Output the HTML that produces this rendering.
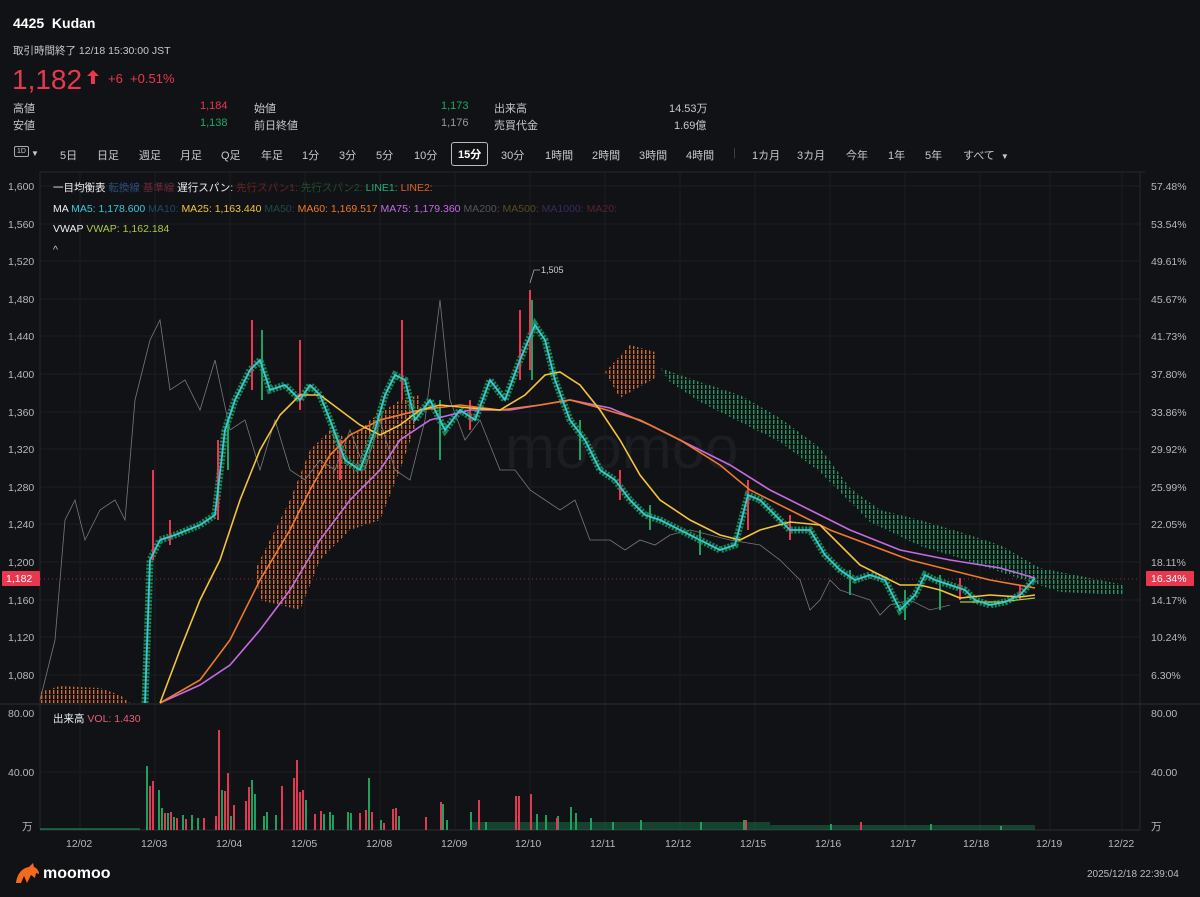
<!DOCTYPE html>
<html><head><meta charset="utf-8"><style>
*{margin:0;padding:0;box-sizing:border-box}
body{width:1200px;height:897px;background:#111216;color:#ddd;font-family:"Liberation Sans","Noto Sans CJK JP",sans-serif;position:relative;overflow:hidden}
.a{position:absolute;white-space:nowrap}
.s{font-size:11px;color:#c8c8cc}
.r{color:#e8384f}.g{color:#22a860}
.tabs span{position:absolute;top:0;font-size:11px;color:#c8c8cc}
</style></head><body>
<div class="a" style="left:13px;top:15px;font-size:14px;color:#fff;font-weight:bold">4425&nbsp; Kudan</div>
<div class="a s" style="left:13px;top:43px;font-size:10.5px">取引時間終了 12/18 15:30:00 JST</div>
<div class="a r" style="left:12px;top:64px;font-size:28px">1,182</div>
<svg class="a" style="left:87px;top:70px" width="12" height="14" viewBox="0 0 12 14"><path d="M6 0 L12 6 L8 6 L8 14 L4 14 L4 6 L0 6 Z" fill="#e8384f"/></svg>
<div class="a r" style="left:108px;top:71px;font-size:13px">+6&nbsp; +0.51%</div>
<div class="a s" style="left:13px;top:100px">高値</div><div class="a s r" style="left:200px;top:100px">1,184</div>
<div class="a s" style="left:254px;top:100px">始値</div><div class="a s g" style="left:441px;top:100px">1,173</div>
<div class="a s" style="left:494px;top:100px">出来高</div><div class="a s" style="left:669px;top:100px">14.53万</div>
<div class="a s" style="left:13px;top:117px">安値</div><div class="a s g" style="left:200px;top:117px">1,138</div>
<div class="a s" style="left:254px;top:117px">前日終値</div><div class="a s" style="left:441px;top:117px;color:#999">1,176</div>
<div class="a s" style="left:494px;top:117px">売買代金</div><div class="a s" style="left:674px;top:117px">1.69億</div>
<div class="a tabs" style="left:0;top:147px;width:1200px;height:14px">
<span style="left:14px;top:-1px;border:1px solid #aaa;border-radius:2px;font-size:7px;padding:1px 2px">1D</span><span style="left:31px;font-size:8px;top:2px">▼</span>
<span style="left:60px">5日</span><span style="left:97px">日足</span><span style="left:139px">週足</span><span style="left:180px">月足</span><span style="left:221px">Q足</span><span style="left:261px">年足</span><span style="left:302px">1分</span><span style="left:339px">3分</span><span style="left:376px">5分</span><span style="left:414px">10分</span>
<span style="left:451px;top:-5px;border:1px solid #bbb;border-radius:3px;padding:3px 6px;color:#fff;font-weight:bold">15分</span>
<span style="left:501px">30分</span><span style="left:545px">1時間</span><span style="left:592px">2時間</span><span style="left:639px">3時間</span><span style="left:686px">4時間</span>
<span style="left:733px;color:#444">|</span><span style="left:752px">1カ月</span><span style="left:797px">3カ月</span><span style="left:846px">今年</span><span style="left:888px">1年</span><span style="left:925px">5年</span><span style="left:963px">すべて&nbsp; <small style="font-size:8px">▼</small></span>
</div>
<svg class="a" style="left:0;top:0" width="1200" height="897">
<defs>
<pattern id="pg" width="4" height="5" patternUnits="userSpaceOnUse"><rect x="1" y="0" width="1.4" height="4" fill="#1f9b62"/></pattern>
<pattern id="po" width="4" height="5" patternUnits="userSpaceOnUse"><rect x="1" y="0" width="1.4" height="4" fill="#d66a2a"/></pattern>
</defs>
<line x1="40" y1="172" x2="1145" y2="172" stroke="#26272c"/>
<g stroke="#1c1d22">
<line x1="40" y1="186" x2="1140" y2="186"/><line x1="40" y1="224" x2="1140" y2="224"/><line x1="40" y1="261" x2="1140" y2="261"/><line x1="40" y1="299" x2="1140" y2="299"/><line x1="40" y1="336" x2="1140" y2="336"/><line x1="40" y1="374" x2="1140" y2="374"/><line x1="40" y1="412" x2="1140" y2="412"/><line x1="40" y1="449" x2="1140" y2="449"/><line x1="40" y1="487" x2="1140" y2="487"/><line x1="40" y1="524" x2="1140" y2="524"/><line x1="40" y1="562" x2="1140" y2="562"/><line x1="40" y1="600" x2="1140" y2="600"/><line x1="40" y1="637" x2="1140" y2="637"/><line x1="40" y1="675" x2="1140" y2="675"/>
<line x1="40" y1="772" x2="1140" y2="772"/>
<line x1="80" y1="172" x2="80" y2="830"/><line x1="155" y1="172" x2="155" y2="830"/><line x1="230" y1="172" x2="230" y2="830"/><line x1="305" y1="172" x2="305" y2="830"/><line x1="380" y1="172" x2="380" y2="830"/><line x1="455" y1="172" x2="455" y2="830"/><line x1="530" y1="172" x2="530" y2="830"/><line x1="605" y1="172" x2="605" y2="830"/><line x1="680" y1="172" x2="680" y2="830"/><line x1="755" y1="172" x2="755" y2="830"/><line x1="830" y1="172" x2="830" y2="830"/><line x1="905" y1="172" x2="905" y2="830"/><line x1="980" y1="172" x2="980" y2="830"/><line x1="1050" y1="172" x2="1050" y2="830"/><line x1="1122" y1="172" x2="1122" y2="830"/>
</g>
<line x1="40" y1="172" x2="40" y2="830" stroke="#26272c"/><line x1="1140" y1="172" x2="1140" y2="830" stroke="#26272c"/>
<line x1="0" y1="704" x2="1200" y2="704" stroke="#2c2d33"/>
<line x1="40" y1="830" x2="1140" y2="830" stroke="#2c2d33"/>
<text x="505" y="468" font-size="60" fill="#1b1d22" font-family="Liberation Sans">moomoo</text>
<g font-size="10.5" fill="#b8b8bc" font-family="Liberation Sans">
<text x="8" y="190">1,600</text><text x="8" y="228">1,560</text><text x="8" y="265">1,520</text><text x="8" y="303">1,480</text><text x="8" y="340">1,440</text><text x="8" y="378">1,400</text><text x="8" y="416">1,360</text><text x="8" y="453">1,320</text><text x="8" y="491">1,280</text><text x="8" y="528">1,240</text><text x="8" y="566">1,200</text><text x="8" y="604">1,160</text><text x="8" y="641">1,120</text><text x="8" y="679">1,080</text>
<text x="1151" y="190">57.48%</text><text x="1151" y="228">53.54%</text><text x="1151" y="265">49.61%</text><text x="1151" y="303">45.67%</text><text x="1151" y="340">41.73%</text><text x="1151" y="378">37.80%</text><text x="1151" y="416">33.86%</text><text x="1151" y="453">29.92%</text><text x="1151" y="491">25.99%</text><text x="1151" y="528">22.05%</text><text x="1151" y="566">18.11%</text><text x="1151" y="604">14.17%</text><text x="1151" y="679">6.30%</text><text x="1151" y="641">10.24%</text>
<text x="8" y="717">80.00</text><text x="8" y="776">40.00</text><text x="1151" y="717">80.00</text><text x="1151" y="776">40.00</text>
<text x="22" y="830" font-family="Noto Sans CJK JP">万</text><text x="1151" y="830" font-family="Noto Sans CJK JP">万</text>
<text x="66" y="847">12/02</text><text x="141" y="847">12/03</text><text x="216" y="847">12/04</text><text x="291" y="847">12/05</text><text x="366" y="847">12/08</text><text x="441" y="847">12/09</text><text x="515" y="847">12/10</text><text x="590" y="847">12/11</text><text x="665" y="847">12/12</text><text x="740" y="847">12/15</text><text x="815" y="847">12/16</text><text x="890" y="847">12/17</text><text x="963" y="847">12/18</text><text x="1036" y="847">12/19</text><text x="1108" y="847">12/22</text>
</g>
<line x1="40" y1="579" x2="1140" y2="579" stroke="#e8384f" stroke-dasharray="1 3" opacity=".6"/>
<rect x="2" y="571" width="38" height="15" fill="#e8384f" rx="1"/><text x="6" y="582" font-size="10.5" fill="#fff">1,182</text>
<rect x="1146" y="571" width="48" height="15" fill="#e8384f" rx="1"/><text x="1151" y="582" font-size="10.5" fill="#fff">16.34%</text>
<polygon fill="url(#pg)" points="660,368 700,382 740,395 780,418 820,448 850,488 880,510 920,520 960,532 1000,545 1040,568 1125,585 1125,595 1060,592 1000,572 960,558 920,546 870,522 850,502 820,472 780,442 740,422 700,402 670,382"/>
<polygon fill="url(#po)" points="255,570 290,500 310,450 330,430 350,440 370,420 400,400 420,395 420,412 400,470 380,520 350,530 320,560 300,610 260,600"/>
<polygon fill="url(#po)" points="605,372 630,345 655,352 655,378 620,398"/>
<polygon fill="url(#po)" points="40,692 60,686 100,688 120,695 130,703 40,703"/>
<polyline fill="none" stroke="#77777c" stroke-width="0.8" points="40,700 55,640 65,520 75,500 85,540 100,510 115,500 125,520 135,400 150,340 160,320 170,390 185,380 200,410 215,360 230,430 245,420 260,470 275,420 290,470 305,480 320,460 335,470 350,430 365,470 380,420 395,470 410,480 425,420 440,300 450,400 465,440 480,420 500,470 515,470 530,490 545,500 560,510 575,500 590,540 610,540 625,550 640,540 655,545 670,535 690,530 710,535 730,540 760,545 780,560 800,580 810,610 820,600 830,580 840,590 855,595 870,600 880,615 890,605 910,600 930,610 950,605"/>
<polyline fill="none" stroke="#17844f" stroke-width="7" stroke-dasharray="2.2 1.4" points="145,703 150,560 160,540 175,535 200,525 215,515 225,430 235,400 250,370 260,360 270,390 285,385 300,400 310,385 320,395 330,420 345,460 360,470 375,430 385,395 395,375 405,380 415,420 430,400 445,430 460,410 475,420 490,380 505,400 520,360 535,325 545,340 555,380 570,420 585,440 600,470 615,480 630,500 645,515 660,520 680,530 700,540 720,550 735,545 748,495 760,500 775,515 790,530 810,530 825,555 840,570 855,580 870,575 885,580 900,610 915,595 925,575 935,580 950,585 965,590 975,600 990,605 1005,602 1020,595 1035,578"/>
<g stroke="#e8384f" stroke-width="2"><line x1="153" y1="470" x2="153" y2="560"/><line x1="218" y1="440" x2="218" y2="520"/><line x1="252" y1="320" x2="252" y2="390"/><line x1="300" y1="340" x2="300" y2="410"/><line x1="402" y1="320" x2="402" y2="400"/><line x1="530" y1="290" x2="530" y2="370"/><line x1="520" y1="310" x2="520" y2="380"/><line x1="748" y1="480" x2="748" y2="530"/><line x1="960" y1="578" x2="960" y2="600"/><line x1="1020" y1="585" x2="1020" y2="600"/><line x1="170" y1="520" x2="170" y2="545"/><line x1="340" y1="440" x2="340" y2="480"/><line x1="470" y1="400" x2="470" y2="430"/><line x1="620" y1="470" x2="620" y2="500"/><line x1="790" y1="515" x2="790" y2="540"/></g>
<g stroke="#1fa05f" stroke-width="2"><line x1="228" y1="420" x2="228" y2="470"/><line x1="262" y1="330" x2="262" y2="400"/><line x1="440" y1="400" x2="440" y2="460"/><line x1="532" y1="300" x2="532" y2="380"/><line x1="905" y1="590" x2="905" y2="620"/><line x1="940" y1="575" x2="940" y2="610"/><line x1="580" y1="420" x2="580" y2="460"/><line x1="650" y1="505" x2="650" y2="530"/><line x1="700" y1="530" x2="700" y2="555"/><line x1="850" y1="570" x2="850" y2="595"/></g>
<polyline fill="none" stroke="#aaa" stroke-width="0.8" points="530,283 534,270 540,270"/><text x="541" y="273" font-size="9" fill="#ccc">1,505</text>
<polyline fill="none" stroke="#c36ce0" stroke-width="1.6" points="160,703 200,685 230,665 260,630 290,590 320,540 350,500 380,470 400,440 430,420 470,410 510,410 540,405 570,400 610,408 650,425 690,445 730,465 770,490 810,510 850,530 900,550 950,560 1000,568 1035,578"/>
<polyline fill="none" stroke="#f07a2a" stroke-width="1.6" points="160,703 200,680 230,640 260,580 290,530 310,490 330,455 350,435 380,420 420,410 460,405 500,410 540,405 570,400 600,408 640,420 680,440 720,465 750,490 790,510 830,530 870,545 910,560 950,570 990,580 1035,588"/>
<polyline fill="none" stroke="#f3c43a" stroke-width="1.6" points="160,703 180,650 200,600 220,560 240,500 260,450 280,415 300,395 320,395 340,410 360,425 380,435 400,425 420,410 440,405 470,408 500,410 525,395 545,375 560,372 580,385 600,410 620,440 640,475 660,500 690,520 720,535 740,540 760,530 790,522 820,525 840,545 860,565 880,575 900,585 920,585 940,590 960,598 990,595 1020,597 1035,595"/>
<polyline fill="none" stroke="#a8c84a" stroke-width="1.2" points="960,602 1000,602 1035,598"/>
<polyline fill="none" stroke="#3cc6d8" stroke-width="1.8" points="145,703 150,560 160,540 175,535 200,525 215,515 225,430 235,400 250,370 260,360 270,390 285,385 300,400 310,385 320,395 330,420 345,460 360,470 375,430 385,395 395,375 405,380 415,420 430,400 445,430 460,410 475,420 490,380 505,400 520,360 535,325 545,340 555,380 570,420 585,440 600,470 615,480 630,500 645,515 660,520 680,530 700,540 720,550 735,545 748,495 760,500 775,515 790,530 810,530 825,555 840,570 855,580 870,575 885,580 900,610 915,595 925,575 935,580 950,585 965,590 975,600 990,605 1005,602 1020,595 1035,578"/>
<g font-size="10.5" font-family="Liberation Sans,Noto Sans CJK JP,sans-serif">
<text x="53" y="191" fill="#eee">一目均衡表 <tspan fill="#2d4b7a">転換線</tspan> <tspan fill="#6a2a3a">基準線</tspan> <tspan fill="#eee">遅行スパン:</tspan> <tspan fill="#6a2222">先行スパン1:</tspan> <tspan fill="#244a2e">先行スパン2:</tspan> <tspan fill="#20b070">LINE1:</tspan>  <tspan fill="#e0602a">LINE2:</tspan></text>
<text x="53" y="212" fill="#eee">MA <tspan fill="#3cc6d8">MA5: 1,178.600</tspan> <tspan fill="#1e4a60">MA10:</tspan> <tspan fill="#f3c43a">MA25: 1,163.440</tspan> <tspan fill="#1e4a48">MA50:</tspan> <tspan fill="#f07a2a">MA60: 1,169.517</tspan> <tspan fill="#c36ce0">MA75: 1,179.360</tspan> <tspan fill="#555">MA200:</tspan> <tspan fill="#5a4a22">MA500:</tspan> <tspan fill="#3a2a5a">MA1000:</tspan> <tspan fill="#5a2230">MA20:</tspan></text>
<text x="53" y="232" fill="#eee">VWAP <tspan fill="#a8c84a">VWAP: 1,162.184</tspan></text>
<text x="53" y="253" fill="#ccc">^</text>
<text x="53" y="722" fill="#eee">出来高 <tspan fill="#e8606f">VOL: 1.430</tspan></text>
</g>
<g fill="#1fa05f">
<rect x="146" y="766" width="2" height="64"/><rect x="158" y="790" width="2" height="40"/><rect x="161" y="808" width="2" height="22"/><rect x="167" y="813" width="2" height="17"/><rect x="173" y="817" width="2" height="13"/><rect x="182" y="815" width="2" height="15"/><rect x="191" y="815" width="2" height="15"/><rect x="197" y="818" width="2" height="12"/><rect x="221" y="790" width="2" height="40"/><rect x="227" y="813" width="2" height="17"/><rect x="230" y="816" width="2" height="14"/><rect x="251" y="780" width="2" height="50"/><rect x="254" y="794" width="2" height="36"/><rect x="263" y="816" width="2" height="14"/><rect x="266" y="812" width="2" height="18"/><rect x="275" y="815" width="2" height="15"/><rect x="305" y="800" width="2" height="30"/><rect x="323" y="814" width="2" height="16"/><rect x="329" y="812" width="2" height="18"/><rect x="332" y="815" width="2" height="15"/><rect x="347" y="812" width="2" height="18"/><rect x="350" y="813" width="2" height="17"/><rect x="368" y="778" width="2" height="52"/><rect x="380" y="820" width="2" height="10"/><rect x="398" y="816" width="2" height="14"/><rect x="442" y="804" width="2" height="26"/><rect x="446" y="820" width="2" height="10"/><rect x="470" y="812" width="2" height="18"/><rect x="485" y="822" width="2" height="8"/><rect x="536" y="814" width="2" height="16"/><rect x="545" y="815" width="2" height="15"/><rect x="557" y="816" width="2" height="14"/><rect x="570" y="807" width="2" height="23"/><rect x="575" y="813" width="2" height="17"/><rect x="590" y="818" width="2" height="12"/><rect x="612" y="822" width="2" height="8"/><rect x="640" y="820" width="2" height="10"/><rect x="700" y="822" width="2" height="8"/><rect x="743" y="820" width="2" height="10"/><rect x="830" y="824" width="2" height="6"/><rect x="930" y="824" width="2" height="6"/><rect x="1000" y="826" width="2" height="4"/>
<rect x="40" y="828" width="100" height="2" opacity=".5"/><rect x="470" y="822" width="300" height="8" opacity=".35"/><rect x="770" y="825" width="265" height="5" opacity=".35"/>
</g>
<g fill="#e03a52">
<rect x="149" y="786" width="2" height="44"/><rect x="152" y="781" width="2" height="49"/><rect x="164" y="813" width="2" height="17"/><rect x="170" y="812" width="2" height="18"/><rect x="176" y="818" width="2" height="12"/><rect x="185" y="819" width="2" height="11"/><rect x="203" y="818" width="2" height="12"/><rect x="215" y="816" width="2" height="14"/><rect x="218" y="730" width="2" height="100"/><rect x="224" y="791" width="2" height="39"/><rect x="227" y="773" width="2" height="57"/><rect x="233" y="805" width="2" height="25"/><rect x="245" y="801" width="2" height="29"/><rect x="248" y="787" width="2" height="43"/><rect x="281" y="786" width="2" height="44"/><rect x="293" y="778" width="2" height="52"/><rect x="296" y="760" width="2" height="70"/><rect x="299" y="792" width="2" height="38"/><rect x="302" y="790" width="2" height="40"/><rect x="314" y="814" width="2" height="16"/><rect x="320" y="811" width="2" height="19"/><rect x="359" y="813" width="2" height="17"/><rect x="365" y="810" width="2" height="20"/><rect x="371" y="812" width="2" height="18"/><rect x="383" y="823" width="2" height="7"/><rect x="392" y="809" width="2" height="21"/><rect x="395" y="808" width="2" height="22"/><rect x="425" y="817" width="2" height="13"/><rect x="440" y="802" width="2" height="28"/><rect x="478" y="800" width="2" height="30"/><rect x="515" y="796" width="2" height="34"/><rect x="518" y="796" width="2" height="34"/><rect x="530" y="794" width="2" height="36"/><rect x="556" y="818" width="2" height="12"/><rect x="745" y="820" width="2" height="10"/><rect x="860" y="822" width="2" height="8"/>
</g>
</svg>
<div class="a" style="left:14px;top:862px;width:26px;height:22px">
<svg width="26" height="22" viewBox="0 0 26 22"><path d="M2 21 C3 12 8 6 15 5 L19 1 L20 5 C23 6 25 9 25 12 L22 11 L21 16 L17 13 L13 21 L10 14 L7 21 Z" fill="#f26a1b"/></svg></div>
<div class="a" style="left:43px;top:865px;font-size:16px;color:#fff;font-weight:bold">moomoo</div>
<div class="a" style="left:1087px;top:869px;font-size:10px;color:#bbb">2025/12/18 22:39:04</div>
</body></html>
